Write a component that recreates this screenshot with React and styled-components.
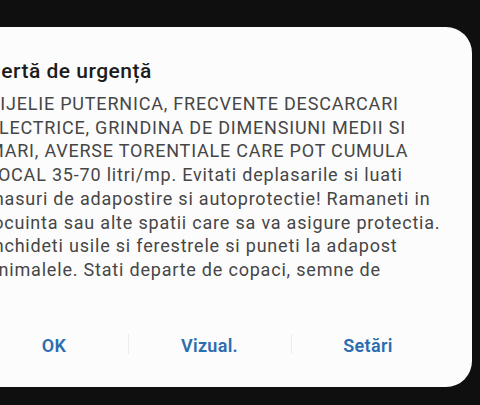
import React from 'react'
import styled, { createGlobalStyle } from 'styled-components'

const GlobalStyle = createGlobalStyle`
    html, body {
        margin: 0;
        padding: 0;
        background: #0f0f0f;
    }
`

const Screen = styled.div`
    width: 480px;
    height: 405px;
    overflow: hidden;
    box-sizing: border-box;
    padding: 27px 8px 0 0;
    display: flex;
    justify-content: flex-end;
    align-items: flex-start;
`

const Card = styled.div`
    flex-shrink: 0;
    width: 512px;
    height: 360px;
    box-sizing: border-box;
    padding: 32px 12px 18px 28px;
    background: #fcfcfc;
    border-radius: 26px;
    display: flex;
    flex-direction: column;
    font-family: Roboto, "Noto Sans", sans-serif;
`

const Title = styled.h2`
    margin: 0 0 9px -7px;
    font-size: 21px;
    line-height: 24px;
    font-weight: 500;
    letter-spacing: 0.5px;
    color: #1c1c1c;
`

const Message = styled.p`
    margin: 0;
    font-size: 18px;
    line-height: 23.7px;
    letter-spacing: 0.8px;
    color: #464646;
    white-space: pre;
`

const Actions = styled.div`
    margin-top: auto;
    margin-left: -8px;
    height: 48px;
    display: grid;
    grid-template-columns: 148px 163px 154px;
    align-items: center;
`

const Action = styled.button`
    position: relative;
    height: 100%;
    border: none;
    background: none;
    padding: 0;
    font-family: Roboto, "Noto Sans", sans-serif;
    font-size: 18px;
    font-weight: 600;
    letter-spacing: 0.3px;
    color: #2b6daf;

    &::before {
        content: '';
        display: ${props => (props.divided ? 'block' : 'none')};
        position: absolute;
        left: 0;
        top: 13px;
        bottom: 15px;
        width: 1px;
        background: #ececec;
    }
`

const text = `VIJELIE PUTERNICA, FRECVENTE DESCARCARI
ELECTRICE, GRINDINA DE DIMENSIUNI MEDII SI
MARI, AVERSE TORENTIALE CARE POT CUMULA
LOCAL 35-70 litri/mp. Evitati deplasarile si luati
masuri de adapostire si autoprotectie! Ramaneti in
locuinta sau alte spatii care sa va asigure protectia.
Inchideti usile si ferestrele si puneti la adapost
animalele. Stati departe de copaci, semne de`

const App = () => (
    <Screen>
        <GlobalStyle />
        <Card>
            <Title>Alertă de urgență</Title>
            <Message>{text}</Message>
            <Actions>
                <Action>OK</Action>
                <Action divided>Vizual.</Action>
                <Action divided>Setări</Action>
            </Actions>
        </Card>
    </Screen>
)

export default App
